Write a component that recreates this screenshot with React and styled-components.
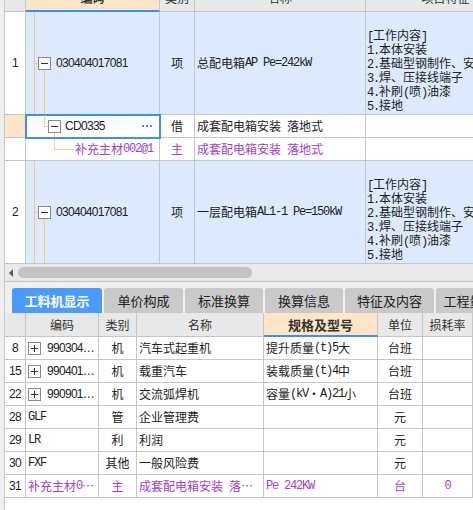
import React from "react";
import styled, { createGlobalStyle } from "styled-components";

const LINE = "#c6c6c6";
const ROWBLUE = "#dde9fc";
const PEACH = "#fde6c8";
const ACCENT = "#3d8ef2";
const PURPLE = "#a33fc4";
const TREE = "#ffc77d";

const Global = createGlobalStyle`
  html, body { margin: 0; padding: 0; background: #fff; }
  body {
    font-family: "Noto Sans CJK SC", "Liberation Sans", sans-serif;
    font-size: 12px;
    color: #222;
  }
`;

const Page = styled.div`
  width: 473px;
  height: 510px;
  overflow: hidden;
  box-sizing: border-box;
  padding-left: 4px;
  background: #efefef;
  display: flex;
  flex-direction: column;
`;

const TopGrid = styled.div`
  display: grid;
  grid-template-columns: 22px 134px 35px 171px 160px;
  grid-template-rows: 12px 103px 23px 23px 103px;
  width: 522px;
  flex: none;
  background: #fff;
`;

const Cell = styled.div`
  box-sizing: border-box;
  position: relative;
  border-right: 1px solid ${LINE};
  border-bottom: 1px solid ${LINE};
  ${(p) => (p.$first ? `border-left: 1px solid ${LINE};` : "")}
  background: ${(p) => p.$bg || "#fff"};
  color: ${(p) => (p.$purple ? PURPLE : "#222")};
  display: flex;
  align-items: center;
  justify-content: ${(p) => (p.$center ? "center" : "flex-start")};
  padding-left: ${(p) => p.$pad || 0}px;
  white-space: nowrap;
  overflow: hidden;
  line-height: 14px;
`;

const HeadCell = styled.div`
  box-sizing: border-box;
  border-right: 1px solid ${LINE};
  border-bottom: ${(p) => (p.$active ? `2px solid ${ACCENT}` : `1px solid ${LINE}`)};
  ${(p) => (p.$first ? `border-left: 1px solid ${LINE};` : "")}
  background: ${(p) => (p.$active ? PEACH : "#e8e8e8")};
  display: flex;
  justify-content: center;
  align-items: flex-end;
  padding-bottom: ${(p) => (p.$active ? 5 : 6)}px;
  overflow: hidden;
  line-height: 14px;
  font-weight: ${(p) => (p.$active ? 700 : 400)};
  color: #333;
`;

const SelectedCell = styled(Cell)`
  z-index: 1;
  outline: 2px solid ${ACCENT};
  outline-offset: -1px;
  overflow: visible;
`;

const TreeSvg = styled.svg`
  position: absolute;
  left: 0;
  top: 0;
  width: 100%;
  height: 100%;
  pointer-events: none;
  path { stroke: ${TREE}; stroke-width: 1; fill: none; shape-rendering: crispEdges; }
`;

const Toggle = styled.span`
  position: relative;
  flex: none;
  box-sizing: border-box;
  width: 13px;
  height: 13px;
  margin-top: ${(p) => (p.$nudge ? 1 : 0)}px;
  margin-right: ${(p) => p.$gap ?? 5}px;
  border: 1px solid #8a8a8a;
  background: #fff;
  &::before {
    content: "";
    position: absolute;
    left: 2px;
    top: 5px;
    width: 7px;
    height: 1px;
    background: #333;
  }
  &::after {
    content: "";
    display: ${(p) => (p.$plus ? "block" : "none")};
    position: absolute;
    left: 5px;
    top: 2px;
    width: 1px;
    height: 7px;
    background: #333;
  }
`;

const Code = styled.span`
  font-family: "Liberation Sans", "Noto Sans CJK SC", sans-serif;
  letter-spacing: -0.7px;
`;

const Latin = styled.span`
  font-family: "Liberation Mono", monospace;
  letter-spacing: -1.2px;
`;

const Dots = styled.span`
  margin-left: auto;
  margin-right: 7px;
  display: flex;
  gap: 2px;
  span { width: 2px; height: 2px; background: ${ACCENT}; }
`;

const FeatureCell = styled(Cell)`
  align-items: flex-end;
  padding-bottom: 2px;
  padding-left: 1px;
`;

const Feature = styled.div`
  display: flex;
  flex-direction: column;
`;

const FeatureLine = styled.div`
  height: 14px;
  line-height: 14px;
  white-space: pre;
`;

const HScroll = styled.div`
  flex: none;
  height: 18px;
  box-sizing: border-box;
  border-left: 1px solid ${LINE};
  border-bottom: 1px solid #c4c4c4;
  background: #e9e9e9;
  display: flex;
  align-items: center;
`;

const ArrowLeft = styled.span`
  margin-left: 4px;
  width: 0;
  height: 0;
  border-top: 4px solid transparent;
  border-bottom: 4px solid transparent;
  border-right: 4px solid #5c5c5c;
`;

const Thumb = styled.span`
  margin-left: 5px;
  width: 234px;
  height: 11px;
  border-radius: 6px;
  background: #c3c3c3;
`;

const TabBar = styled.div`
  flex: none;
  height: 31px;
  box-sizing: border-box;
  border-left: 1px solid ${LINE};
  background: #f0f0f0;
  display: flex;
  align-items: flex-end;
  gap: 2px;
  padding-left: 7px;
  white-space: nowrap;
`;

const Tab = styled.div`
  flex: none;
  width: ${(p) => p.$w}px;
  height: 25px;
  border-radius: 3px 3px 0 0;
  background: ${(p) => (p.$active ? "#4a9cf8" : "#c9c9c9")};
  color: ${(p) => (p.$active ? "#fff" : "#222")};
  font-weight: ${(p) => (p.$active ? 700 : 400)};
  font-size: 13px;
  display: flex;
  align-items: center;
  justify-content: center;
  overflow: hidden;
`;

const BottomGrid = styled.div`
  flex: none;
  display: grid;
  grid-template-columns: 22px 73px 38px 127px 114px 45px 50px;
  grid-template-rows: 24px repeat(7, 23px);
  background: #fff;
`;

const BHead = styled.div`
  box-sizing: border-box;
  border-right: 1px solid ${LINE};
  border-bottom: ${(p) => (p.$active ? `2px solid ${ACCENT}` : `1px solid ${LINE}`)};
  ${(p) => (p.$first ? `border-left: 1px solid ${LINE};` : "")}
  background: ${(p) => (p.$active ? PEACH : "#e8e8e8")};
  font-weight: ${(p) => (p.$active ? 700 : 400)};
  font-size: ${(p) => (p.$active ? 13 : 12)}px;
  color: #333;
  display: flex;
  align-items: center;
  justify-content: center;
  white-space: nowrap;
  overflow: hidden;
`;

const Filler = styled.div`
  flex: 1;
  background: #fff;
  border-left: 1px solid ${LINE};
`;

function Mixed({ text }) {
  const parts = text.split(/([\x20-\x7e]+)/).filter(Boolean);
  return parts.map((p, i) =>
    /^[\x20-\x7e]+$/.test(p) ? (
      <Latin key={i}>{p.replace(/ /g, "\u00a0")}</Latin>
    ) : (
      <React.Fragment key={i}>{p}</React.Fragment>
    )
  );
}

const FEATURE = ["[工作内容]", "1.本体安装", "2.基础型钢制作、安装", "3.焊、压接线端子", "4.补刷(喷)油漆", "5.接地"];

function FeatureText() {
  return (
    <Feature>
      {FEATURE.map((l, i) => (
        <FeatureLine key={i}>
          <Mixed text={l} />
        </FeatureLine>
      ))}
    </Feature>
  );
}

function ItemRow({ num, name }) {
  return (
    <>
      <Cell $first $center>
        <Code>{num}</Code>
      </Cell>
      <Cell $bg={ROWBLUE} $pad={12}>
        <TreeSvg>
          <path d="M8.5 0V102M8 51.5H12M18.5 58V102" />
        </TreeSvg>
        <Toggle $nudge />
        <Code>030404017081</Code>
      </Cell>
      <Cell $bg={ROWBLUE} $center>项</Cell>
      <Cell $bg={ROWBLUE} $pad={2}>
        <Mixed text={name} />
      </Cell>
      <FeatureCell $bg={ROWBLUE}>
        <FeatureText />
      </FeatureCell>
    </>
  );
}

const TABS = [
  { t: "工料机显示", w: 90, active: true },
  { t: "单价构成", w: 79 },
  { t: "标准换算", w: 78 },
  { t: "换算信息", w: 78 },
  { t: "特征及内容", w: 89 },
  { t: "工程量明细", w: 80 },
];

const ROWS = [
  { n: "8", code: "990304…", plus: true, type: "机", name: "汽车式起重机", spec: "提升质量(t)5大", unit: "台班" },
  { n: "15", code: "990401…", plus: true, type: "机", name: "载重汽车", spec: "装载质量(t)4中", unit: "台班" },
  { n: "22", code: "990901…", plus: true, type: "机", name: "交流弧焊机", spec: "容量(kV·A)21小", unit: "台班" },
  { n: "28", code: "GLF", mono: true, type: "管", name: "企业管理费", spec: "", unit: "元" },
  { n: "29", code: "LR", mono: true, type: "利", name: "利润", spec: "", unit: "元" },
  { n: "30", code: "FXF", mono: true, type: "其他", name: "一般风险费", spec: "", unit: "元" },
  { n: "31", code: "补充主材0…", purple: true, type: "主", name: "成套配电箱安装 落…", spec: "Pe 242KW", unit: "台", loss: "0" },
];

export default function App() {
  return (
    <>
      <Global />
      <Page>
        <TopGrid>
          <HeadCell $first />
          <HeadCell $active>编码</HeadCell>
          <HeadCell>类别</HeadCell>
          <HeadCell>名称</HeadCell>
          <HeadCell>项目特征</HeadCell>

          <ItemRow num="1" name="总配电箱AP Pe=242kW" />

          <Cell $first $bg={PEACH} />
          <SelectedCell $pad={22}>
            <TreeSvg>
              <path d="M18.5 0V12M18 11.5H22M28.5 18V22" />
            </TreeSvg>
            <Toggle $nudge $gap={4} />
            <Code>CD0335</Code>
            <Dots>
              <span />
              <span />
              <span />
            </Dots>
          </SelectedCell>
          <Cell $center>借</Cell>
          <Cell $pad={2}>
            <Mixed text="成套配电箱安装 落地式" />
          </Cell>
          <Cell />

          <Cell $first />
          <Cell $pad={49} $purple>
            <TreeSvg>
              <path d="M28.5 0V12M28 11.5H47" />
            </TreeSvg>
            <Mixed text="补充主材002@1" />
          </Cell>
          <Cell $center $purple>主</Cell>
          <Cell $pad={2} $purple>
            <Mixed text="成套配电箱安装 落地式" />
          </Cell>
          <Cell />

          <ItemRow num="2" name="一层配电箱AL1-1 Pe=150kW" />
        </TopGrid>

        <HScroll>
          <ArrowLeft />
          <Thumb />
        </HScroll>

        <TabBar>
          {TABS.map((t) => (
            <Tab key={t.t} $w={t.w} $active={t.active}>
              {t.t}
            </Tab>
          ))}
        </TabBar>

        <BottomGrid>
          <BHead $first />
          <BHead>编码</BHead>
          <BHead>类别</BHead>
          <BHead>名称</BHead>
          <BHead $active>规格及型号</BHead>
          <BHead>单位</BHead>
          <BHead>损耗率</BHead>
          {ROWS.map((r) => (
            <React.Fragment key={r.n}>
              <Cell $first $center>
                <Code>{r.n}</Code>
              </Cell>
              <Cell $pad={2} $purple={r.purple}>
                {r.plus && <Toggle $plus $gap={6} />}
                {r.plus ? <Code>{r.code}</Code> : <Mixed text={r.code} />}
              </Cell>
              <Cell $center $purple={r.purple}>{r.type}</Cell>
              <Cell $pad={2} $purple={r.purple}>
                <Mixed text={r.name} />
              </Cell>
              <Cell $pad={2} $purple={r.purple}>
                <Mixed text={r.spec} />
              </Cell>
              <Cell $center $purple={r.purple}>{r.unit}</Cell>
              <Cell $center $purple={r.purple}>
                {r.loss && <Latin>{r.loss}</Latin>}
              </Cell>
            </React.Fragment>
          ))}
        </BottomGrid>
        <Filler />
      </Page>
    </>
  );
}
